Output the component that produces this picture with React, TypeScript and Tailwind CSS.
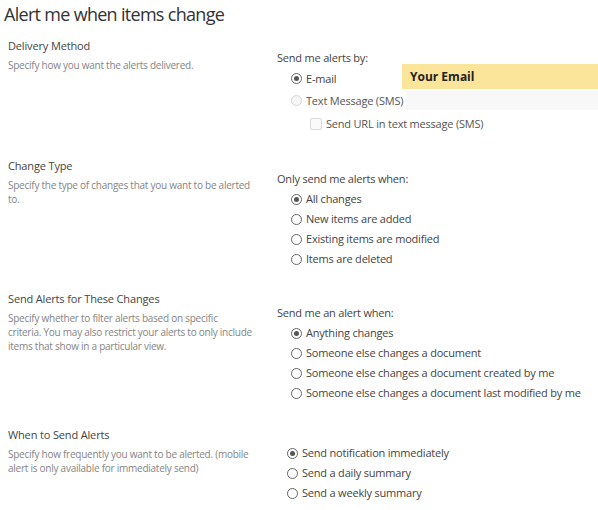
import React from "react";

function Radio({ checked = false, disabled = false }: { checked?: boolean; disabled?: boolean }) {
  return (
    <span
      className={
        "relative inline-flex h-[11px] w-[11px] shrink-0 items-center justify-center rounded-full border " +
        (disabled ? "border-[#d6d6d6] bg-[#f6f6f6]" : "border-[#666] bg-white")
      }
    >
      {checked && <span className="h-[5px] w-[5px] rounded-full bg-[#555]" />}
    </span>
  );
}

function RadioRow({ label, checked = false }: { label: string; checked?: boolean }) {
  return (
    <div className="flex h-[20px] items-center gap-[4px] whitespace-nowrap pl-[14px]">
      <Radio checked={checked} />
      <span className="text-[#444]">{label}</span>
    </div>
  );
}

function Left({ title, desc }: { title: string; desc: React.ReactNode }) {
  return (
    <div className="w-[269px] shrink-0 pr-[8px]">
      <div className="h-[16px] text-[11px] leading-[16px] tracking-[-0.15px] text-[#444]">{title}</div>
      <div className="mt-[4px] whitespace-nowrap text-[10px] leading-[14px] tracking-[-0.25px] text-[#858585]">
        {desc}
      </div>
    </div>
  );
}

export default function App() {
  return (
    <div
      className="h-[510px] w-[598px] overflow-hidden bg-white text-[11px] leading-[16px] tracking-[-0.2px] text-[#444]"
      style={{ fontFamily: '"Open Sans", "Noto Sans", sans-serif' }}
    >
      <div className="h-[38px] pl-[4px] pt-[1px] text-[18px] leading-[26px] tracking-[-0.7px] text-[#333]">
        Alert me when items change
      </div>

      {/* Delivery Method */}
      <div className="flex h-[120px] pl-[8px]">
        <Left title="Delivery Method" desc="Specify how you want the alerts delivered." />
        <div className="flex-1 pt-[12px]">
          <div className="h-[16px]">Send me alerts by:</div>
          <div className="-mt-[2px] flex h-[25px] items-center">
            <div className="flex w-[125px] items-center gap-[4px] pl-[14px] pt-[4px]">
              <Radio checked />
              <span>E-mail</span>
            </div>
            <div className="flex h-[25px] flex-1 items-center bg-[#fbe59b] pl-[8px] text-[12px] font-bold tracking-normal text-[#222]">
              Your Email
            </div>
          </div>
          <div className="mt-[2px] flex h-[19px] items-center">
            <div className="flex w-[129px] items-center gap-[4px] whitespace-nowrap pl-[14px]">
              <Radio disabled />
              <span className="text-[#555]">Text Message (SMS)</span>
            </div>
            <div className="h-[19px] flex-1 bg-[#f8f8f8]" />
          </div>
          <div className="mt-[4px] flex h-[20px] items-center gap-[4px] whitespace-nowrap pl-[33px]">
            <span className="h-[12px] w-[12px] rounded-[2px] border border-[#d8d8d8] bg-[#fafafa]" />
            <span className="text-[#555]">Send URL in text message (SMS)</span>
          </div>
        </div>
      </div>

      {/* Change Type */}
      <div className="flex h-[133px] pl-[8px]">
        <Left
          title="Change Type"
          desc={
            <>
              Specify the type of changes that you want to be alerted
              <br />
              to.
            </>
          }
        />
        <div className="flex-1 pt-[13px]">
          <div className="h-[16px]">Only send me alerts when:</div>
          <div className="mt-[2px]">
            <RadioRow label="All changes" checked />
            <RadioRow label="New items are added" />
            <RadioRow label="Existing items are modified" />
            <RadioRow label="Items are deleted" />
          </div>
        </div>
      </div>

      {/* Send Alerts for These Changes */}
      <div className="flex h-[136px] pl-[8px]">
        <Left
          title="Send Alerts for These Changes"
          desc={
            <>
              Specify whether to filter alerts based on specific
              <br />
              criteria. You may also restrict your alerts to only include
              <br />
              items that show in a particular view.
            </>
          }
        />
        <div className="flex-1 pt-[14px]">
          <div className="h-[16px]">Send me an alert when:</div>
          <div className="mt-[2px]">
            <RadioRow label="Anything changes" checked />
            <RadioRow label="Someone else changes a document" />
            <RadioRow label="Someone else changes a document created by me" />
            <RadioRow label="Someone else changes a document last modified by me" />
          </div>
        </div>
      </div>

      {/* When to Send Alerts */}
      <div className="flex pl-[8px]">
        <Left
          title="When to Send Alerts"
          desc={
            <>
              Specify how frequently you want to be alerted. (mobile
              <br />
              alert is only available for immediately send)
            </>
          }
        />
        <div className="-ml-[4px] flex-1 pt-[16px]">
          <RadioRow label="Send notification immediately" checked />
          <RadioRow label="Send a daily summary" />
          <RadioRow label="Send a weekly summary" />
        </div>
      </div>
    </div>
  );
}
